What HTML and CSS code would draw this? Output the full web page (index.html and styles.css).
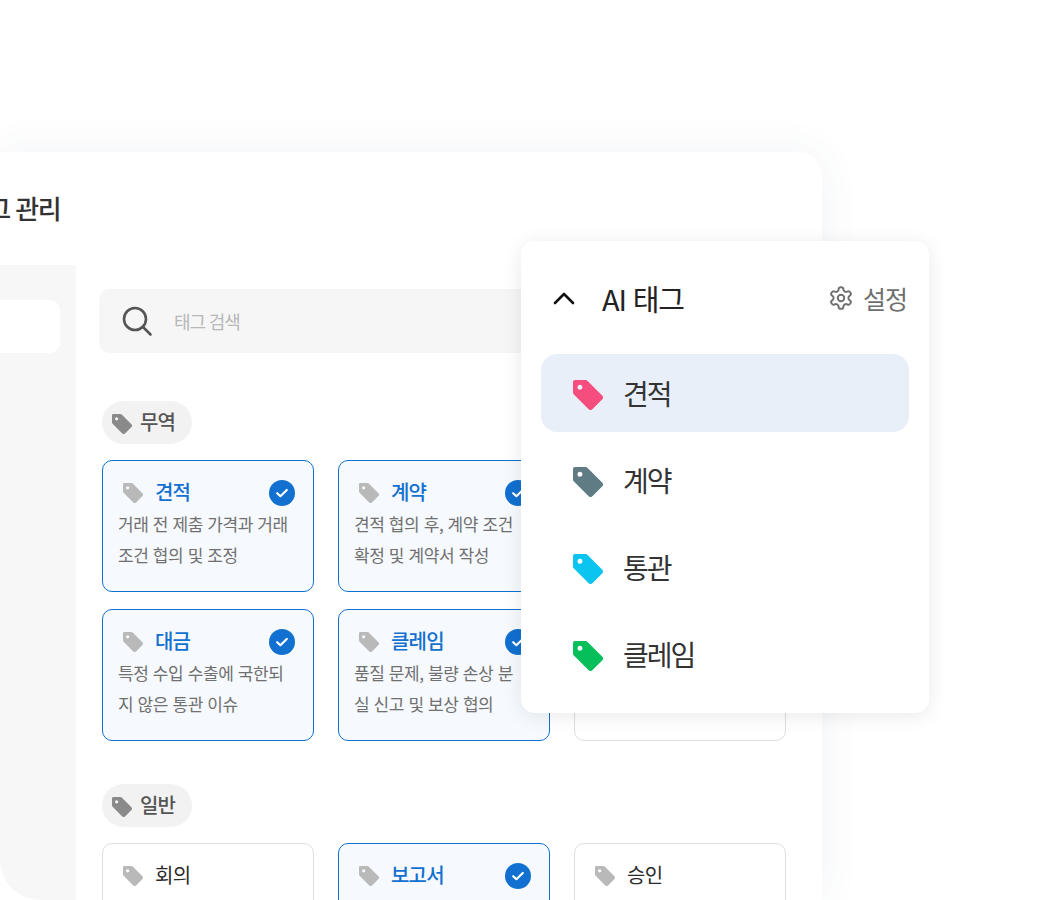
FILE: index.html
```html
<!DOCTYPE html>
<html lang="ko">
<head>
    <meta charset="UTF-8">
    <title>태그 관리</title>
    <link rel="stylesheet" href="styles.css">
</head>
<body>

<svg class="sprite" aria-hidden="true">
    <symbol id="tag" viewBox="0 0 30 30">
        <path fill-rule="evenodd" d="M2 0H12.5a3 3 0 0 1 2.1.9L29.1 15.4a3 3 0 0 1 0 4.2L19.6 29.1a3 3 0 0 1-4.2 0L.9 14.6A3 3 0 0 1 0 12.5V2a2 2 0 0 1 2-2ZM7 4.7a2.5 2.5 0 1 0 0 5 2.5 2.5 0 0 0 0-5Z"/>
    </symbol>
    <symbol id="check" viewBox="0 0 26 26">
        <circle cx="13" cy="13" r="13"/>
        <path d="M8.2 13.2l3.2 3 6.4-6.2" fill="none" stroke="#fff" stroke-width="2.2" stroke-linecap="round" stroke-linejoin="round"/>
    </symbol>
</svg>

<div class="window">
    <header class="window-head">
        <h1 class="window-title">태그 관리</h1>
    </header>
    <div class="window-body">
        <aside class="sidebar">
            <div class="sidebar-box"></div>
        </aside>
        <main class="content">
            <div class="search">
                <svg class="search-icon" viewBox="0 0 28 30" fill="none" stroke="#555" stroke-width="2.6" stroke-linecap="round">
                    <circle cx="12" cy="13" r="11"/>
                    <path d="M20.5 21.5l7 7"/>
                </svg>
                <span class="search-text">태그 검색</span>
            </div>

            <section class="group">
                <div class="chip"><svg class="tag-sm chip-tag"><use href="#tag"/></svg><span class="chip-text">무역</span></div>
                <div class="cards">
                    <div class="card on">
                        <div class="card-head"><svg class="tag-sm"><use href="#tag"/></svg><span class="card-name">견적</span><svg class="card-check"><use href="#check"/></svg></div>
                        <p class="card-desc">거래 전 제춤 가격과 거래 조건 협의 및 조정</p>
                    </div>
                    <div class="card on">
                        <div class="card-head"><svg class="tag-sm"><use href="#tag"/></svg><span class="card-name">계약</span><svg class="card-check"><use href="#check"/></svg></div>
                        <p class="card-desc">견적 협의 후, 계약 조건 확정 및 계약서 작성</p>
                    </div>
                    <div class="card"></div>
                    <div class="card on">
                        <div class="card-head"><svg class="tag-sm"><use href="#tag"/></svg><span class="card-name">대금</span><svg class="card-check"><use href="#check"/></svg></div>
                        <p class="card-desc">특정 수입 수출에 국한되지 않은 통관 이슈</p>
                    </div>
                    <div class="card on">
                        <div class="card-head"><svg class="tag-sm"><use href="#tag"/></svg><span class="card-name">클레임</span><svg class="card-check"><use href="#check"/></svg></div>
                        <p class="card-desc">품질 문제, 불량 손상 분실 신고 및 보상 협의</p>
                    </div>
                    <div class="card"></div>
                </div>
            </section>

            <section class="group">
                <div class="chip"><svg class="tag-sm chip-tag"><use href="#tag"/></svg><span class="chip-text">일반</span></div>
                <div class="cards">
                    <div class="card">
                        <div class="card-head"><svg class="tag-sm"><use href="#tag"/></svg><span class="card-name">회의</span></div>
                    </div>
                    <div class="card on">
                        <div class="card-head"><svg class="tag-sm"><use href="#tag"/></svg><span class="card-name">보고서</span><svg class="card-check"><use href="#check"/></svg></div>
                    </div>
                    <div class="card">
                        <div class="card-head"><svg class="tag-sm"><use href="#tag"/></svg><span class="card-name">승인</span></div>
                    </div>
                </div>
            </section>
        </main>
    </div>
</div>

<div class="popup">
    <div class="popup-head">
        <svg class="chevron" viewBox="0 0 22 14" fill="none" stroke="#111" stroke-width="2.6" stroke-linecap="round" stroke-linejoin="round">
            <path d="M2 12l9-9 9 9"/>
        </svg>
        <span class="popup-title">AI 태그</span>
        <span class="popup-setting">
            <svg class="gear" viewBox="0 0 24 24" fill="none" stroke="#6f6f6f" stroke-width="1.8" stroke-linecap="round" stroke-linejoin="round">
                <path d="M12.22 2h-.44a2 2 0 0 0-2 2v.18a2 2 0 0 1-1 1.73l-.43.25a2 2 0 0 1-2 0l-.15-.08a2 2 0 0 0-2.73.73l-.22.38a2 2 0 0 0 .73 2.73l.15.1a2 2 0 0 1 1 1.72v.51a2 2 0 0 1-1 1.74l-.15.09a2 2 0 0 0-.73 2.73l.22.38a2 2 0 0 0 2.73.73l.15-.08a2 2 0 0 1 2 0l.43.25a2 2 0 0 1 1 1.73V20a2 2 0 0 0 2 2h.44a2 2 0 0 0 2-2v-.18a2 2 0 0 1 1-1.73l.43-.25a2 2 0 0 1 2 0l.15.08a2 2 0 0 0 2.73-.73l.22-.39a2 2 0 0 0-.73-2.73l-.15-.08a2 2 0 0 1-1-1.74v-.5a2 2 0 0 1 1-1.74l.15-.09a2 2 0 0 0 .73-2.73l-.22-.38a2 2 0 0 0-2.73-.73l-.15.08a2 2 0 0 1-2 0l-.43-.25a2 2 0 0 1-1-1.73V4a2 2 0 0 0-2-2z"/>
                <circle cx="12" cy="12" r="3"/>
            </svg>
            설정
        </span>
    </div>
    <ul class="popup-list">
        <li class="popup-item active"><svg class="tag-lg pink"><use href="#tag"/></svg>견적</li>
        <li class="popup-item"><svg class="tag-lg slate"><use href="#tag"/></svg>계약</li>
        <li class="popup-item"><svg class="tag-lg sky"><use href="#tag"/></svg>통관</li>
        <li class="popup-item"><svg class="tag-lg green"><use href="#tag"/></svg>클레임</li>
    </ul>
</div>

</body>
</html>
```

FILE: styles.css
```css
* {
    box-sizing: border-box;
}
html, body {
    height: 900px;
}
body {
    margin: 0;
    padding-top: 152px;
    overflow: hidden;
    position: relative;
    background-color: #fff;
    font-family: "Noto Sans CJK KR", "Noto Sans", sans-serif;
    color: #222;
}
.sprite {
    display: none;
}

/* window behind the popup */
.window {
    width: 822px;
    height: 748px;
    background-color: #fff;
    border-radius: 0 24px 0 0;
    box-shadow: 0 0 40px rgba(60, 80, 130, 0.07);
    display: flex;
    flex-direction: column;
}
.window-head {
    height: 113px;
    flex: none;
    display: flex;
    align-items: center;
}
.window-title {
    width: 60px;
    margin: 0 0 3px;
    display: flex;
    justify-content: flex-end;
    white-space: nowrap;
    font-size: 26px;
    font-weight: 500;
    letter-spacing: -1.6px;
    color: #333;
}
.window-body {
    flex: 1;
    display: flex;
    min-height: 0;
}
.sidebar {
    width: 76px;
    flex: none;
    padding: 35px 16px 0 0;
    background-color: #f7f7f7;
    border-bottom-left-radius: 40px;
}
.sidebar-box {
    height: 53px;
    background-color: #fff;
    border-radius: 0 10px 10px 0;
}
.content {
    flex: 1;
    padding: 24px 36px 0 23px;
    overflow: hidden;
}

.search {
    height: 64px;
    display: flex;
    align-items: center;
    padding-left: 24px;
    background-color: #f6f6f6;
    border-radius: 10px;
}
.search-icon {
    width: 28px;
    height: 30px;
    overflow: visible;
}
.search-text {
    margin-left: 23px;
    font-size: 18px;
    letter-spacing: -1.1px;
    color: #b8b8b8;
}

.group {
    margin: 48px 0 0 3px;
}
.group + .group {
    margin-top: 43px;
}
.chip {
    width: 90px;
    height: 43px;
    display: flex;
    align-items: center;
    padding-left: 10px;
    background-color: #f2f2f2;
    border-radius: 22px;
}
.chip-text {
    margin-bottom: 2px;
    font-size: 20px;
    font-weight: 500;
    letter-spacing: -0.8px;
    color: #555;
}
.chip-tag {
    margin: 2px 8px 0 0;
}
.tag-sm {
    width: 20px;
    height: 20px;
    flex: none;
    fill: #b9b9b9;
}
.chip .chip-tag {
    fill: #8a8a8a;
}
.cards {
    display: grid;
    grid-template-columns: repeat(3, 212px);
    gap: 17px 24px;
    margin-top: 16px;
}
.card {
    height: 132px;
    padding: 15px 18px 0 15px;
    background-color: #fff;
    border: 1px solid #dedede;
    border-radius: 10px;
}
.card.on {
    background-color: #f6f9fd;
    border-color: #1170d0;
}
.card-head {
    height: 34px;
    display: flex;
    align-items: center;
    padding-left: 5px;
}
.card-name {
    margin: 0 0 4px 12px;
    font-size: 20px;
    letter-spacing: -0.6px;
    color: #2a2a2a;
}
.card.on .card-name {
    font-weight: 500;
    letter-spacing: -0.8px;
    color: #1170d0;
}
.card-check {
    width: 26px;
    height: 26px;
    margin-left: auto;
    fill: #1170d0;
}
.card-desc {
    max-width: 172px;
    margin: -2px 0 0;
    font-size: 17px;
    line-height: 31px;
    letter-spacing: -0.4px;
    color: #707070;
}

/* floating panel */
.popup {
    position: absolute;
    left: 521px;
    top: 241px;
    width: 408px;
    height: 472px;
    padding: 0 20px;
    background-color: #fff;
    border-radius: 14px;
    box-shadow: 0 3px 20px rgba(0, 0, 0, 0.09);
}
.popup-head {
    height: 113px;
    display: flex;
    align-items: center;
    padding: 0 2px 0 12px;
}
.chevron {
    width: 22px;
    height: 14px;
}
.popup-title {
    margin-left: 27px;
    font-size: 29px;
    letter-spacing: -1.2px;
    color: #222;
}
.popup-setting {
    margin-left: auto;
    display: flex;
    align-items: center;
    font-size: 25px;
    letter-spacing: -1px;
    color: #6f6f6f;
}
.gear {
    width: 26px;
    height: 26px;
    margin-right: 9px;
}
.popup-list {
    list-style: none;
    margin: 0;
    padding: 0;
    display: flex;
    flex-direction: column;
    gap: 9px;
}
.popup-item {
    height: 78px;
    display: flex;
    align-items: center;
    padding-left: 32px;
    border-radius: 16px;
    font-size: 28px;
    letter-spacing: -2px;
    color: #333;
}
.popup-item.active {
    background-color: #e8eff9;
}
.tag-lg {
    width: 30px;
    height: 30px;
    margin: 3px 20px 0 0;
}
.pink { fill: #f54d7e; }
.slate { fill: #5f7c85; }
.sky { fill: #0bc5f0; }
.green { fill: #06bf5a; }
```
